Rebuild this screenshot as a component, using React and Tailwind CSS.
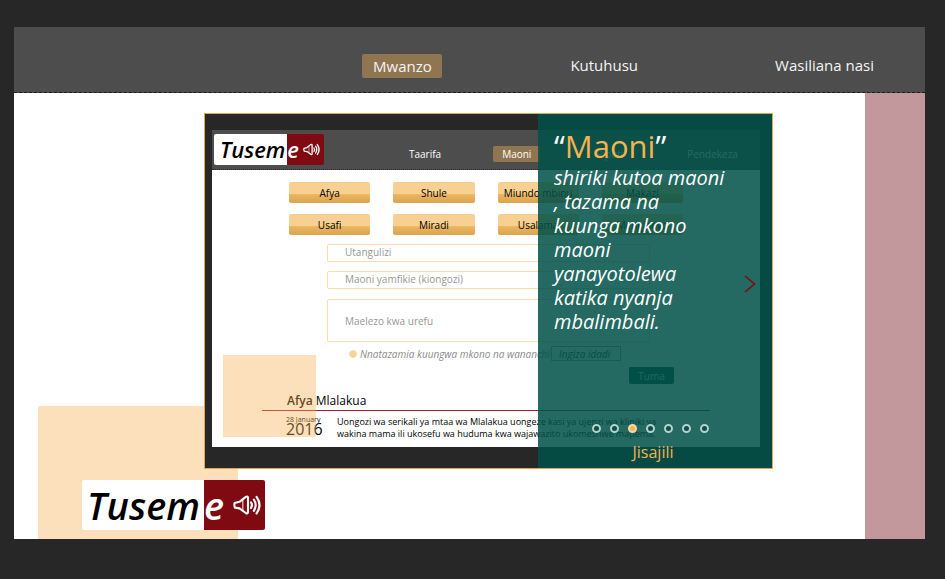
import React from "react";

const slides = [0, 1, 2, 3, 4, 5, 6];

const topics = [
  "Afya",
  "Shule",
  "Miundo mbinu",
  "Makazi",
  "Usafi",
  "Miradi",
  "Usalama",
  "Mengineyo",
];

function Speaker({ className }) {
  return (
    <svg viewBox="0 0 28 20" className={className} fill="none" stroke="white" aria-hidden="true">
      <path d="M1.6 8 Q1 10 1.9 12.6 L6.5 13.4 L12.8 18 Q15 19.2 15 16.8 V3 Q15 .8 12.8 1.9 L6.5 6.8 Z" strokeWidth="2.1" strokeLinejoin="round" />
      <path d="M9.8 5 V15.5" strokeWidth="1.2" opacity="0.8" />
      <path d="M18 7.4 Q20 10 18 13" strokeWidth="2.1" strokeLinecap="round" />
      <path d="M20.8 4.6 Q24.6 10 20.8 15.8" strokeWidth="2.1" strokeLinecap="round" />
      <path d="M23.6 1.8 Q29.4 10 23.6 18.4" strokeWidth="2.2" strokeLinecap="round" />
    </svg>
  );
}

function Logo({ small }) {
  return (
    <a
      href="#"
      aria-label="Tuseme"
      className={
        "flex shrink-0 rounded-xs font-semibold italic " +
        (small ? "h-[31px] w-[110px] text-[22px] leading-[31px]" : "h-[50px] w-[183px] text-[38px] leading-[50px]")
      }
    >
      <span className={"flex w-2/3 justify-end rounded-l-xs bg-white text-black " + (small ? "pr-0.5" : "pr-1")}>Tusem</span>
      <span className="flex w-1/3 items-center justify-between rounded-r-xs bg-[#7f0a12] pr-1 text-white">
        e
        <Speaker className={small ? "h-[13px] w-[17px]" : "h-5 w-7"} />
      </span>
    </a>
  );
}

function Preview() {
  return (
    <div className="mt-4 mr-3 ml-[7px] flex h-[317px] flex-col overflow-hidden bg-white text-[10px] leading-3">
      <header className="flex h-10 shrink-0 items-center border-b border-dotted border-[#2b2b2b] bg-[#4d4d4d] pl-0.5 text-white">
        <Logo small />
        <nav className="flex flex-1 items-center pt-2 pl-[85px]">
          <a href="#">Taarifa</a>
          <a href="#" className="ml-[52px] rounded-xs bg-[#8f7650] px-[9px] py-0.5">Maoni</a>
          <a href="#" className="ml-14">Ripoti</a>
          <a href="#" className="ml-16">Pendekeza</a>
        </nav>
      </header>

      <div className="mt-3 ml-[77px] grid w-[394px] shrink-0 grid-cols-4 gap-x-[23px] gap-y-[11px]">
        {topics.map((t) => (
          <button
            key={t}
            type="button"
            className="h-[21px] rounded-xs bg-linear-to-b from-[#f8d091] from-55% via-[#e9b662] via-60% to-[#dca44c] whitespace-nowrap text-black"
          >
            {t}
          </button>
        ))}
      </div>

      <form className="mt-[9px] ml-[115px] flex w-[323px] shrink-0 flex-col">
        <input aria-label="Utangulizi" placeholder="Utangulizi" className="h-[18px] rounded-xs border border-[#fbdcae] px-[17px] pb-0.5 placeholder:text-[#979797]" />
        <input aria-label="Maoni yamfikie" placeholder="Maoni yamfikie (kiongozi)" className="mt-[9px] h-[18px] rounded-xs border border-[#fbdcae] px-[17px] pb-0.5 placeholder:text-[#979797]" />
        <textarea aria-label="Maelezo" placeholder="Maelezo kwa urefu" className="mt-2.5 h-[43px] resize-none rounded-xs border border-[#fbdcae] px-[17px] py-[15px] placeholder:text-[#979797]" />
        <div className="mt-1 flex items-center pl-[22px] text-[#8b8b8b] italic">
          <input id="support" type="radio" className="size-2 shrink-0 appearance-none rounded-full border border-[#fbdcae] bg-[#f8d091]" />
          <label htmlFor="support" className="w-[194px] shrink-0 pl-[3px] whitespace-nowrap">Nnatazamia kuungwa mkono na wananchi</label>
          <input aria-label="Ingiza idadi" placeholder="Ingiza idadi" className="h-[15px] w-[70px] border border-[#999999] px-[7px] italic placeholder:text-[#333333]" />
        </div>
        <button type="button" className="mt-1.5 -mr-6 h-[17px] w-[45px] self-end rounded-xs bg-[#004d46] text-[#e5e5e5]">Tuma</button>
      </form>

      <article className="ml-[50px] shrink-0 text-black">
        <h3 className="mt-2 w-[448px] border-b border-[#a51c30] pl-[25px] text-[12px] leading-[18px]">
          <span className="font-semibold">Afya</span> Mlalakua
        </h3>
        <div className="flex pt-[5px]">
          <time className="w-[75px] shrink-0 pl-6">
            <span className="block text-[7px] leading-[7px]">28 January</span>
            <span className="block text-[16px] leading-3">2016</span>
          </time>
          <p className="text-[9px] leading-3 whitespace-nowrap">
            Uongozi wa serikali ya mtaa wa Mlalakua uongeze kasi ya ujenzi wa kliniki ya
            <br />
            wakina mama ili ukosefu wa huduma kwa wajawazito ukomeshwe mapema.
          </p>
        </div>
      </article>
    </div>
  );
}

function SlidePanel() {
  return (
    <section className="absolute inset-y-0 right-0 flex w-[234px] flex-col bg-[#005048]/86 pt-3 pl-4 text-white">
      <h2 className="text-[31px] leading-10">
        “<span className="text-[#f2b350]">Maoni</span>”
      </h2>
      <p className="text-[20px] leading-6 whitespace-nowrap italic">
        shiriki kutoa maoni
        <br />, tazama na
        <br />
        kuunga mkono
        <br />
        maoni
        <br />
        yanayotolewa
        <br />
        katika nyanja
        <br />
        mbalimbali.
      </p>
      <button type="button" aria-label="Next" className="absolute top-[161px] right-4">
        <svg viewBox="0 0 12 18" className="h-[18px] w-3" fill="none" stroke="#7f0a12" strokeWidth="1.6">
          <path d="M1 1 L10.5 9 L1 17" />
        </svg>
      </button>
      <div className="mt-auto mr-[63px] mb-[7px] flex gap-[9px] self-end">
        {slides.map((i) => (
          <button
            key={i}
            type="button"
            aria-label={"Slide " + (i + 1)}
            className={
              "size-[9px] rounded-full border-2 " +
              (i === 2 ? "border-[#f6d9a6] bg-[#f2b350]" : "border-[#b9cfcb] bg-[#00544c]")
            }
          />
        ))}
      </div>
      <a href="#" className="mb-1 self-center pr-5 text-[16px] leading-6 text-[#f2b350]">Jisajili</a>
    </section>
  );
}

export default function App() {
  return (
    <div className="min-h-screen bg-[#272727] px-[14px] pt-[27px] pr-5 pb-10 font-['Open_Sans','Noto_Sans',sans-serif]">
      <header className="flex h-[66px] items-center justify-end border-b border-dashed border-[#1b1b1b] bg-[#4d4d4d] pt-3 pr-[51px] text-[15px] text-[#f4f4f4]">
        <nav className="flex items-center">
          <a href="#" className="w-20 rounded-xs bg-[#8f7650] text-center leading-6">Mwanzo</a>
          <a href="#" className="ml-32">Kutuhusu</a>
          <a href="#" className="ml-[137px]">Wasiliana nasi</a>
        </nav>
      </header>

      <main className="relative flex h-[446px] overflow-hidden bg-white">
        <div className="absolute bottom-0 left-6 h-[133px] w-[200px] rounded-tl-xs bg-[#fbe0bb]" />
        <div className="w-[190px] shrink-0" />
        <div className="relative mt-5 h-[356px] min-w-0 flex-1 overflow-hidden border border-[#e0a950] bg-[#272727]">
          <Preview />
          <div className="absolute top-[241px] left-[18px] h-[82px] w-[93px] bg-[#f5b155]/40" />
          <SlidePanel />
        </div>
        <aside className="ml-[92px] w-[60px] shrink-0 bg-[#c3989d]" />
        <div className="absolute bottom-[9px] left-[68px]">
          <Logo />
        </div>
      </main>
    </div>
  );
}
